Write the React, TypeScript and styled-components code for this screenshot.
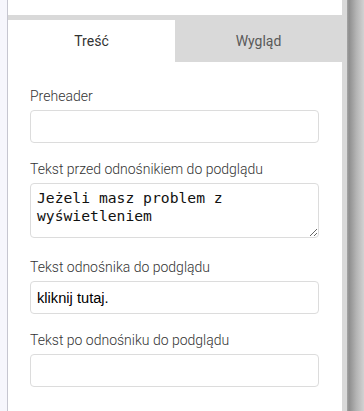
import React, { useState } from 'react';
import styled, { createGlobalStyle } from 'styled-components';

const GlobalStyle = createGlobalStyle`
  html, body {
    margin: 0;
    padding: 0;
    background: #f6f6fc;
  }
  body {
    font-family: Roboto, "Liberation Sans", Arial, sans-serif;
  }
`;

const Page = styled.div`
  display: flex;
  height: 411px;
  overflow: hidden;
`;

const Gutter = styled.div`
  width: 7px;
  flex: none;
  background: #f6f6fc;
  border-right: 1px solid #c6c6d0;
`;

const Panel = styled.div`
  width: 334px;
  flex: none;
  background: #fff;
  display: flex;
  flex-direction: column;
`;

const PanelEdge = styled.div`
  width: 5px;
  flex: none;
  background: #d9d9d9;
`;

const Shadow = styled.div`
  flex: 1;
  background: linear-gradient(to right, #a6a6a6 0, #8e8e8e 12%, #b4b4b4 55%, #d2d2d2 100%);
`;

const TopSpace = styled.div`
  height: 15px;
`;

const TabBar = styled.div`
  display: flex;
  background: #d9d9d9;
  padding-top: 5px;
`;

const Tab = styled.button<{ $active?: boolean }>`
  flex: 1;
  height: 42px;
  border: none;
  margin: 0;
  padding: 0;
  background: ${p => (p.$active ? '#fff' : '#d9d9d9')};
  color: ${p => (p.$active ? '#333' : '#5a5a5a')};
  font-family: Roboto, "Liberation Sans", Arial, sans-serif;
  font-size: 14px;
  font-weight: 400;
  cursor: pointer;
`;

const Form = styled.form`
  display: flex;
  flex-direction: column;
  padding: 26px 23px 0 22px;
`;

const Field = styled.div`
  display: flex;
  flex-direction: column;
  gap: 6px;
  margin-bottom: 18px;
`;

const Label = styled.label`
  font-size: 14px;
  line-height: 16px;
  font-weight: 300;
  color: #333;
`;

const TextInput = styled.input`
  box-sizing: border-box;
  width: 100%;
  height: 33px;
  border: 1px solid #dcdcdc;
  border-radius: 4px;
  padding: 0 6px;
  font-family: "Liberation Sans", Arial, sans-serif;
  font-size: 14.67px;
  color: #000;
  background: #fff;
  outline: none;
`;

const TextArea = styled.textarea`
  box-sizing: border-box;
  display: block;
  width: 100%;
  height: 55px;
  border: 1px solid #dcdcdc;
  border-radius: 4px;
  padding: 5px 6px 2px;
  font-family: "DejaVu Sans Mono", "Liberation Mono", monospace;
  font-size: 14.7px;
  line-height: 17.5px;
  color: #111;
  background: #fff;
  resize: vertical;
  outline: none;
  margin-bottom: 3px;
`;

export default function App() {
  const [tab, setTab] = useState<'content' | 'look'>('content');
  const [preheader, setPreheader] = useState('');
  const [before, setBefore] = useState('Jeżeli masz problem z wyświetleniem');
  const [link, setLink] = useState('kliknij tutaj.');
  const [after, setAfter] = useState('');

  return (
    <>
      <GlobalStyle />
      <Page>
        <Gutter />
        <Panel>
          <TopSpace />
          <TabBar>
            <Tab type="button" $active={tab === 'content'} onClick={() => setTab('content')}>
              Treść
            </Tab>
            <Tab type="button" $active={tab === 'look'} onClick={() => setTab('look')}>
              Wygląd
            </Tab>
          </TabBar>
          <Form onSubmit={e => e.preventDefault()}>
            <Field>
              <Label htmlFor="preheader">Preheader</Label>
              <TextInput id="preheader" value={preheader} onChange={e => setPreheader(e.target.value)} />
            </Field>
            <Field>
              <Label htmlFor="before">Tekst przed odnośnikiem do podglądu</Label>
              <TextArea id="before" value={before} onChange={e => setBefore(e.target.value)} />
            </Field>
            <Field>
              <Label htmlFor="link">Tekst odnośnika do podglądu</Label>
              <TextInput id="link" value={link} onChange={e => setLink(e.target.value)} />
            </Field>
            <Field>
              <Label htmlFor="after">Tekst po odnośniku do podglądu</Label>
              <TextInput id="after" value={after} onChange={e => setAfter(e.target.value)} />
            </Field>
          </Form>
        </Panel>
        <PanelEdge />
        <Shadow />
      </Page>
    </>
  );
}
